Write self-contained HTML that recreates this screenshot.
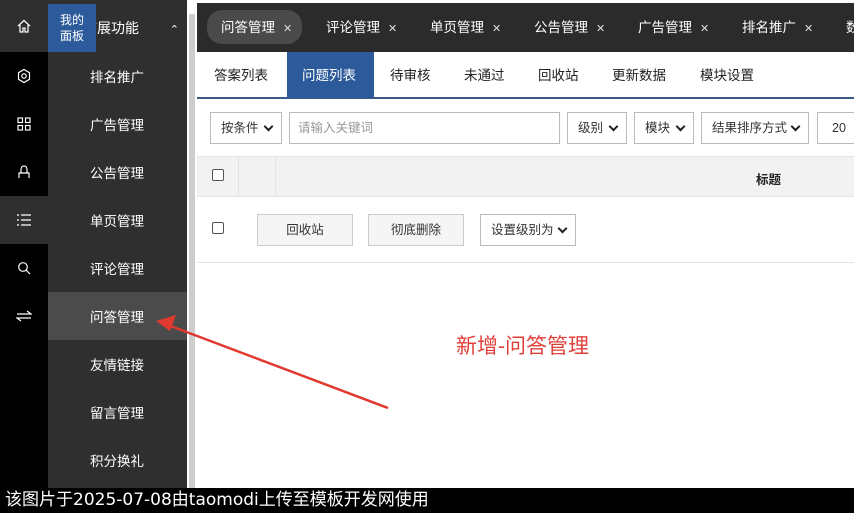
<!DOCTYPE html>
<html><head><meta charset="utf-8"><style>
*{margin:0;padding:0;box-sizing:border-box}
body{width:854px;height:513px;overflow:hidden;background:#fff;font-family:"Liberation Sans","Noto Sans CJK SC",sans-serif;font-size:13px;position:relative;color:#333}
.abs{position:absolute}
.ib{left:0;top:0;width:48px;height:488px;background:#000}
.ic{position:absolute;left:0;width:48px;height:48px;display:flex;align-items:center;justify-content:center}
.sub{left:48px;top:0;width:139px;height:488px;background:#2f2f2f}
.si{position:absolute;left:48px;width:139px;height:48px;line-height:52px;color:#fff;font-size:13.5px;padding-left:42px}
.top{left:197px;top:3px;width:657px;height:49px;background:#2b2b2b}
.tab{position:absolute;height:34px;line-height:36px;color:#fff;font-size:13.5px}
.tab span{font-size:11px;margin-left:8px;color:#ddd}
.sel{position:absolute;height:32px;border:1px solid #bbb;background:#fff;font-size:12.5px;line-height:30px;padding-left:10px;color:#333}
.sel:after{content:"";position:absolute;right:9px;top:10px;width:5px;height:5px;border-right:2px solid #222;border-bottom:2px solid #222;transform:rotate(45deg)}
.inp{position:absolute;height:32px;border:1px solid #bbb;background:#fff;font-size:12.5px;line-height:30px;padding-left:10px}
.btn{position:absolute;top:214px;height:32px;line-height:30px;border:1px solid #ccc;background:#f5f5f5;text-align:center;font-size:12.5px}
.cb{position:absolute;width:12px;height:12px;border:1px solid #555;border-radius:2px;background:#fff}
</style></head><body>
<div class="abs ib"></div>
<div class="ic" style="top:0;background:#2f2f2f;height:52px"><svg width="16" height="16" viewBox="0 0 16 16" fill="none" stroke="#fff" stroke-width="1.2"><path d="M2 8L8 2.5 14 8M4 7v7h3v-4h2v4h3V7"/></svg></div>
<div class="ic" style="top:52px"><svg width="16" height="16" viewBox="0 0 16 16" fill="none" stroke="#fff" stroke-width="1.2"><path d="M8 1.5l5.5 3.2v6.6L8 14.5 2.5 11.3V4.7z"/><circle cx="8" cy="8" r="2.2"/></svg></div>
<div class="ic" style="top:100px"><svg width="14" height="14" viewBox="0 0 14 14" fill="none" stroke="#fff" stroke-width="1.2"><rect x="1" y="1" width="4.5" height="4.5"/><rect x="8.5" y="1" width="4.5" height="4.5"/><rect x="1" y="8.5" width="4.5" height="4.5"/><rect x="8.5" y="8.5" width="4.5" height="4.5"/></svg></div>
<div class="ic" style="top:148px"><svg width="14" height="14" viewBox="0 0 14 14" fill="none" stroke="#fff" stroke-width="1.2"><path d="M2 13V8h10v5M4 8V4a3 3 0 016 0v4"/></svg></div>
<div class="ic" style="top:196px;background:#2f2f2f"><svg width="14" height="12" viewBox="0 0 14 12" fill="none" stroke="#fff" stroke-width="1.2"><path d="M0 1h2M4 1h10M0 6h2M4 6h10M0 11h2M4 11h10"/></svg></div>
<div class="ic" style="top:244px"><svg width="14" height="14" viewBox="0 0 14 14" fill="none" stroke="#fff" stroke-width="1.2"><circle cx="6" cy="6" r="4.3"/><path d="M9 9l4 4"/></svg></div>
<div class="ic" style="top:292px"><svg width="16" height="12" viewBox="0 0 16 12" fill="none" stroke="#fff" stroke-width="1.2"><path d="M1 4h14L11 1M15 8H1l4 3"/></svg></div>
<div class="abs sub"></div>
<div class="si" style="top:4px;padding-left:35px;color:#fff;font-size:14px;line-height:48px">扩展功能<span style="position:absolute;right:8px;font-size:11px;top:2px">⌃</span></div>
<div class="abs" style="left:48px;top:4px;width:48px;height:48px;background:#2d5a9b;color:#fff;font-size:12px;line-height:16px;padding:8px 0 0 12px">我的<br>面板</div>
<div class="si" style="top:52px">排名推广</div>
<div class="si" style="top:100px">广告管理</div>
<div class="si" style="top:148px">公告管理</div>
<div class="si" style="top:196px">单页管理</div>
<div class="si" style="top:244px">评论管理</div>
<div class="si" style="top:292px;background:#4b4b4b">问答管理</div>
<div class="si" style="top:340px">友情链接</div>
<div class="si" style="top:388px">留言管理</div>
<div class="si" style="top:436px">积分换礼</div>
<div class="abs" style="left:187px;top:0;width:10px;height:488px;background:#fff"></div>
<div class="abs" style="left:189px;top:14px;width:6px;height:474px;background:#cdcdcd"></div>
<div class="abs top"></div>
<div class="tab" style="left:207px;top:10px;width:95px;background:#4a4a4a;border-radius:15px;padding-left:14px;line-height:35px">问答管理<span>✕</span></div>
<div class="tab" style="left:326px;top:10px">评论管理<span>✕</span></div>
<div class="tab" style="left:430px;top:10px">单页管理<span>✕</span></div>
<div class="tab" style="left:534px;top:10px">公告管理<span>✕</span></div>
<div class="tab" style="left:638px;top:10px">广告管理<span>✕</span></div>
<div class="tab" style="left:742px;top:10px">排名推广<span>✕</span></div>
<div class="tab" style="left:846px;top:10px">数</div>
<div class="abs" style="left:197px;top:97px;width:657px;height:2px;background:#3a5a85"></div>
<div class="abs" style="left:287px;top:52px;width:87px;height:46px;background:#2d5a9b"></div>
<div class="abs" style="top:52px;left:197px;width:657px;height:46px;line-height:47px;font-size:13.5px;color:#222">
<span class="abs" style="left:17px">答案列表</span><span class="abs" style="left:105px;color:#fff">问题列表</span><span class="abs" style="left:193px">待审核</span><span class="abs" style="left:267px">未通过</span><span class="abs" style="left:341px">回收站</span><span class="abs" style="left:415px">更新数据</span><span class="abs" style="left:503px">模块设置</span></div>
<div class="sel" style="left:210px;top:112px;width:72px">按条件</div>
<div class="inp" style="left:289px;top:112px;width:271px;color:#999;padding-left:8px">请输入关键词</div>
<div class="sel" style="left:567px;top:112px;width:60px">级别</div>
<div class="sel" style="left:634px;top:112px;width:60px">模块</div>
<div class="sel" style="left:701px;top:112px;width:108px">结果排序方式</div>
<div class="inp" style="left:817px;top:112px;width:50px;padding-left:14px">20</div>
<div class="abs" style="left:197px;top:156px;width:657px;height:41px;background:#f2f2f2;border-top:1px solid #e5e5e5;border-bottom:1px solid #e5e5e5"></div>
<div class="abs" style="left:238px;top:157px;width:1px;height:39px;background:#e3e3e3"></div>
<div class="abs" style="left:275px;top:157px;width:1px;height:39px;background:#e3e3e3"></div>
<div class="abs" style="left:756px;top:169px;font-size:12.5px;font-weight:bold;color:#222">标题</div>
<div class="cb" style="left:212px;top:169px"></div>
<div class="cb" style="left:212px;top:222px"></div>
<div class="btn" style="left:257px;width:96px">回收站</div>
<div class="btn" style="left:368px;width:96px">彻底删除</div>
<div class="sel" style="left:480px;top:214px;width:96px">设置级别为</div>
<div class="abs" style="left:197px;top:262px;width:657px;height:1px;background:#e5e5e5"></div>
<div class="abs" style="left:456px;top:330px;font-size:21px;color:#e0403a">新增-问答管理</div>
<svg class="abs" style="left:0;top:0" width="854" height="513"><path d="M388 408L168 325" stroke="#e03a30" stroke-width="2.5"/><path d="M156 321l20-6-6 16z" fill="#e03a30"/></svg>
<div class="abs" style="left:0;top:488px;width:854px;height:25px;background:#000;color:#fff;font-size:17px;line-height:25px;padding-left:5px;font-family:'DejaVu Sans','Noto Sans CJK SC',sans-serif">该图片于2025-07-08由taomodi上传至模板开发网使用</div>
</body></html>
